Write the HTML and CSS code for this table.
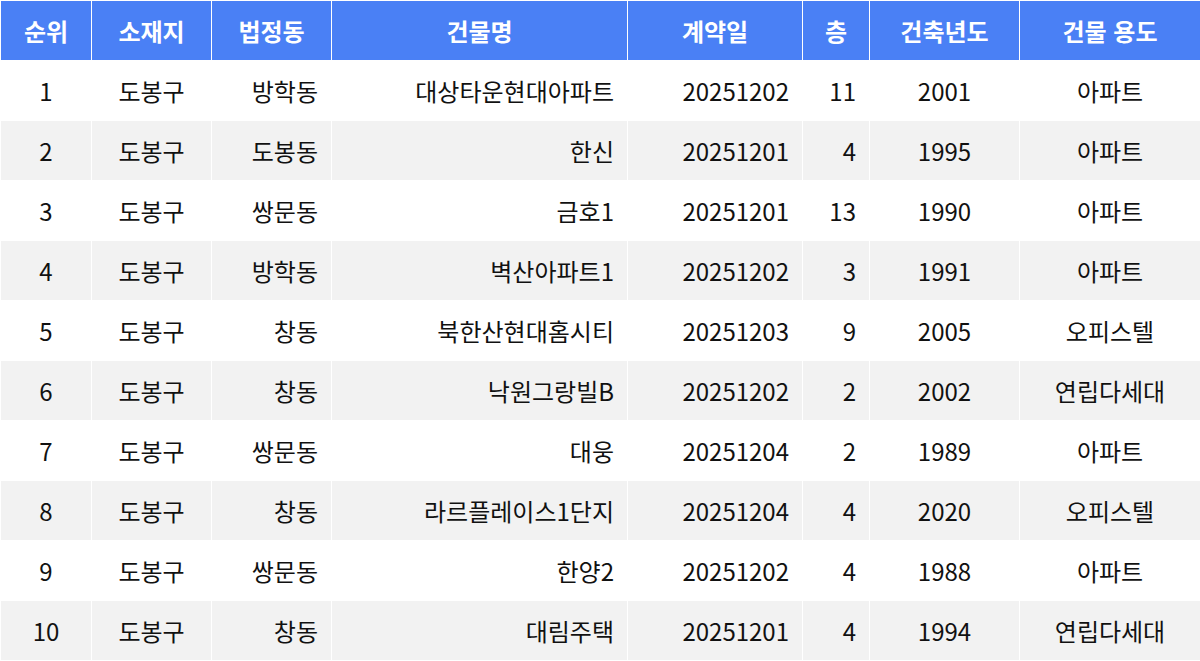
FILE: index.html
```html
<!DOCTYPE html>
<html lang="ko">
<head>
<meta charset="utf-8">
<link rel="stylesheet" href="styles.css">
</head>
<body>
<table class="deals">
  <colgroup>
    <col class="c1"><col class="c2"><col class="c3"><col class="c4"><col class="c5"><col class="c6"><col class="c7"><col class="c8">
  </colgroup>
  <thead>
    <tr><th>순위</th><th>소재지</th><th>법정동</th><th>건물명</th><th>계약일</th><th>층</th><th>건축년도</th><th>건물 용도</th></tr>
  </thead>
  <tbody>
    <tr><td class="ctr">1</td><td class="ctr">도봉구</td><td class="rt">방학동</td><td class="rt">대상타운현대아파트</td><td class="rt">20251202</td><td class="rt">11</td><td class="ctr">2001</td><td class="ctr">아파트</td></tr>
    <tr><td class="ctr">2</td><td class="ctr">도봉구</td><td class="rt">도봉동</td><td class="rt">한신</td><td class="rt">20251201</td><td class="rt">4</td><td class="ctr">1995</td><td class="ctr">아파트</td></tr>
    <tr><td class="ctr">3</td><td class="ctr">도봉구</td><td class="rt">쌍문동</td><td class="rt">금호1</td><td class="rt">20251201</td><td class="rt">13</td><td class="ctr">1990</td><td class="ctr">아파트</td></tr>
    <tr><td class="ctr">4</td><td class="ctr">도봉구</td><td class="rt">방학동</td><td class="rt">벽산아파트1</td><td class="rt">20251202</td><td class="rt">3</td><td class="ctr">1991</td><td class="ctr">아파트</td></tr>
    <tr><td class="ctr">5</td><td class="ctr">도봉구</td><td class="rt">창동</td><td class="rt">북한산현대홈시티</td><td class="rt">20251203</td><td class="rt">9</td><td class="ctr">2005</td><td class="ctr">오피스텔</td></tr>
    <tr><td class="ctr">6</td><td class="ctr">도봉구</td><td class="rt">창동</td><td class="rt">낙원그랑빌B</td><td class="rt">20251202</td><td class="rt">2</td><td class="ctr">2002</td><td class="ctr">연립다세대</td></tr>
    <tr><td class="ctr">7</td><td class="ctr">도봉구</td><td class="rt">쌍문동</td><td class="rt">대웅</td><td class="rt">20251204</td><td class="rt">2</td><td class="ctr">1989</td><td class="ctr">아파트</td></tr>
    <tr><td class="ctr">8</td><td class="ctr">도봉구</td><td class="rt">창동</td><td class="rt">라르플레이스1단지</td><td class="rt">20251204</td><td class="rt">4</td><td class="ctr">2020</td><td class="ctr">오피스텔</td></tr>
    <tr><td class="ctr">9</td><td class="ctr">도봉구</td><td class="rt">쌍문동</td><td class="rt">한양2</td><td class="rt">20251202</td><td class="rt">4</td><td class="ctr">1988</td><td class="ctr">아파트</td></tr>
    <tr><td class="ctr">10</td><td class="ctr">도봉구</td><td class="rt">창동</td><td class="rt">대림주택</td><td class="rt">20251201</td><td class="rt">4</td><td class="ctr">1994</td><td class="ctr">연립다세대</td></tr>
  </tbody>
</table>
</body>
</html>
```

FILE: styles.css
```css
html, body {
  margin: 0;
  padding: 0;
  background: #ffffff;
}

.deals {
  width: 1200px;
  border-collapse: collapse;
  table-layout: fixed;
  font-family: "Noto Sans CJK KR", "Noto Sans", sans-serif;
  font-size: 24px;
  color: #111111;
}

.c1 { width: 91px; }
.c2 { width: 120px; }
.c3 { width: 120px; }
.c4 { width: 296px; }
.c5 { width: 175px; }
.c6 { width: 67px; }
.c7 { width: 150px; }
.c8 { width: 181px; }

.deals th,
.deals td {
  height: 60px;
  padding: 0 13px;
  border: 1px solid #ffffff;
  white-space: nowrap;
  box-sizing: border-box;
}

.deals th {
  background: #4a80f5;
  color: #ffffff;
  font-weight: 700;
  text-align: center;
}

.deals tbody tr:nth-child(even) td {
  background: #f2f2f2;
}

.ctr { text-align: center; }
.rt { text-align: right; }
```
